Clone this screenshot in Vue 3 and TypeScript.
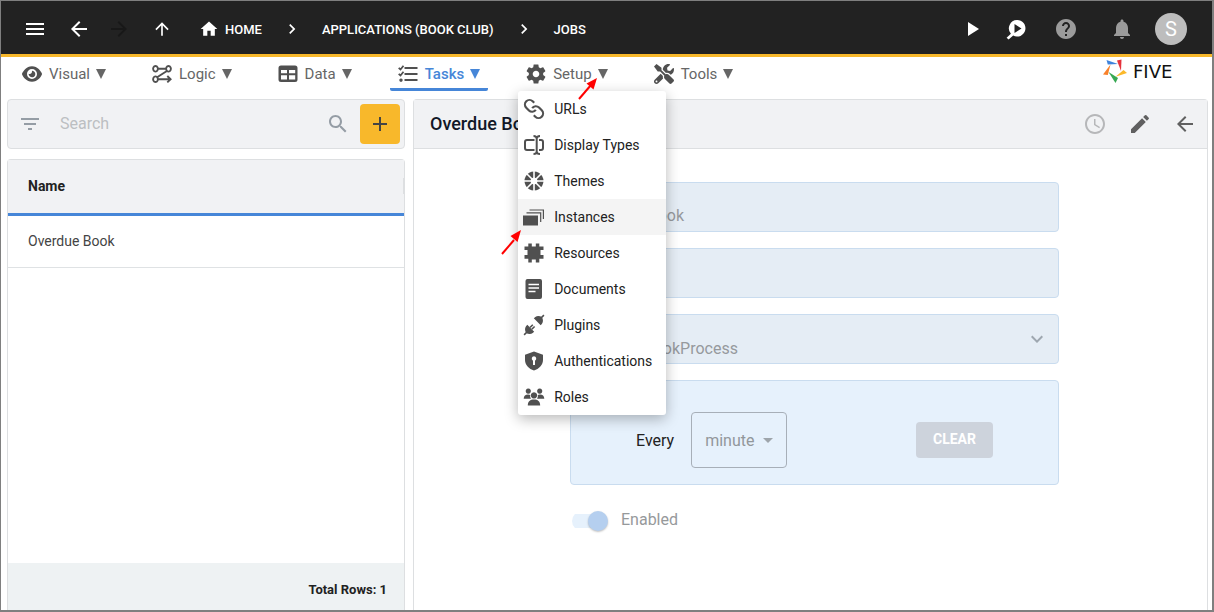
<script setup lang="ts">
import { h, ref } from 'vue'

interface Glyph {
  box: string
  fill?: string
  line?: string
  width?: number
  cut?: string
  cutWidth?: number
}

interface Tab {
  label: string
  icon: Glyph
}

const g24 = (fill: string): Glyph => ({ box: '0 0 24 24', fill })

const icons: Record<string, Glyph> = {
  menu: g24('M3 18h18v-2H3v2zm0-5h18v-2H3v2zm0-7v2h18V6H3z'),
  back: g24('M20 11H7.83l5.59-5.59L12 4l-8 8 8 8 1.41-1.41L7.83 13H20v-2z'),
  forward: g24('M12 4l-1.41 1.41L16.17 11H4v2h12.17l-5.58 5.59L12 20l8-8z'),
  up: g24('M4 12l1.41 1.41L11 7.83V20h2V7.83l5.58 5.59L20 12l-8-8-8 8z'),
  home: g24('M10 20v-6h4v6h5v-8h3L12 3 2 12h3v8z'),
  chevron: g24('M10 6L8.59 7.41 13.17 12l-4.58 4.59L10 18l6-6z'),
  expand: g24('M7.41 8.59L12 13.17l4.59-4.58L18 10l-6 6-6-6 1.41-1.41z'),
  play: g24('M8 5v14l11-7z'),
  inspect: {
    box: '0 0 24 24',
    fill: 'M13 3a8.3 8.3 0 1 1-3.8 15.6L4.6 22.6 2.6 20.8 6.9 16.7A8.3 8.3 0 0 1 13 3zM10.500 7v9l7-4.500z'
  },
  help: g24('M12 2C6.48 2 2 6.48 2 12s4.48 10 10 10 10-4.48 10-10S17.52 2 12 2zm1 17h-2v-2h2v2zm2.07-7.75l-.9.92C13.45 12.9 13 13.5 13 15h-2v-.5c0-1.1.45-2.1 1.17-2.83l1.24-1.26c.37-.36.59-.86.59-1.41 0-1.1-.9-2-2-2s-2 .9-2 2H8c0-2.21 1.79-4 4-4s4 1.79 4 4c0 .88-.36 1.68-.93 2.25z'),
  bell: g24('M12 22c1.1 0 2-.9 2-2h-4c0 1.1.89 2 2 2zm6-6v-5c0-3.07-1.64-5.64-4.5-6.32V4c0-.83-.67-1.5-1.5-1.5s-1.5.67-1.5 1.5v.68C7.63 5.36 6 7.92 6 11v5l-2 2v1h16v-1l-2-2z'),
  filter: g24('M10 18h4v-2h-4v2zM3 6v2h18V6H3zm3 7h12v-2H6v2z'),
  search: g24('M15.5 14h-.79l-.28-.27C15.41 12.59 16 11.11 16 9.5 16 5.91 13.09 3 9.5 3S3 5.91 3 9.5 5.91 16 9.5 16c1.61 0 3.09-.59 4.23-1.57l.27.28v.79l5 4.99L20.49 19l-4.99-5zm-6 0C7.01 14 5 11.99 5 9.5S7.01 5 9.5 5 14 7.01 14 9.5 11.99 14 9.5 14z'),
  add: g24('M19 13h-6v6h-2v-6H5v-2h6V5h2v6h6v2z'),
  clock: g24('M11.99 2C6.47 2 2 6.48 2 12s4.47 10 9.99 10C17.52 22 22 17.52 22 12S17.52 2 11.99 2zM12 20c-4.42 0-8-3.58-8-8s3.58-8 8-8 8 3.58 8 8-3.58 8-8 8zm.5-13H11v6l5.25 3.15.75-1.23-4.5-2.67z'),
  edit: g24('M3 17.25V21h3.75L17.81 9.94l-3.75-3.75L3 17.25zM20.71 7.04c.39-.39.39-1.02 0-1.41l-2.34-2.34a.9959.9959 0 0 0-1.41 0l-1.83 1.83 3.75 3.75 1.83-1.83z'),
  visual: {
    box: '0 0 576 512',
    fill: 'M288 32c-80.8 0-145.5 36.8-192.6 80.6C48.6 156 17.3 208 2.5 243.7c-3.3 7.9-3.3 16.7 0 24.6C17.3 304 48.6 356 95.4 399.4C142.5 443.2 207.2 480 288 480s145.5-36.8 192.6-80.6c46.8-43.5 78.1-95.4 93-131.1c3.3-7.9 3.3-16.7 0-24.6c-14.9-35.7-46.2-87.7-93-131.1C433.5 68.8 368.8 32 288 32zM144 256a144 144 0 1 1 288 0 144 144 0 1 1 -288 0zm144-64c0 35.3-28.7 64-64 64c-7.1 0-13.9-1.2-20.3-3.3c-5.5-1.8-11.9 1.6-11.7 7.4c.3 6.9 1.3 13.8 3.2 20.7c13.7 51.2 66.4 81.6 117.6 67.9s81.6-66.4 67.9-117.6c-11.1-41.5-47.8-69.4-88.6-71.1c-5.8-.2-9.2 6.1-7.4 11.7c2.1 6.4 3.3 13.2 3.3 20.3z'
  },
  logic: {
    box: '0 0 20 20',
    line: 'M3.5 2a2.4 2.8 0 1 0 .01 0zM16.5 2a2.4 2.8 0 1 0 .01 0zM3.5 12.4a2.4 2.8 0 1 0 .01 0zM6 4.8H14M14.5 7.2L5.5 13M6 15.2H18.5M15.3 12L18.6 15.2 15.3 18.4',
    width: 1.9
  },
  data: {
    box: '0 0 20 20',
    fill: 'M3 1.5H17a2.5 2.5 0 0 1 2.5 2.5V15.5a2.5 2.5 0 0 1-2.5 2.5H3a2.5 2.5 0 0 1-2.5-2.5V4A2.5 2.5 0 0 1 3 1.5zM3 6V9.3H9V6zM11 6V9.3H17.2V6zM3 11.3V15.5H9V11.3zM11 11.3V15.5H17.2V11.3z'
  },
  tasks: {
    box: '0 0 20 20',
    line: 'M6.5 4H19.5M6.5 10H19.5M6.5 16H19.5M.7 3.8L2.5 5.5 5.5 1.8M.7 9.8L2.5 11.5 5.5 7.8',
    fill: 'M3 14.4a1.7 1.7 0 1 1-.01 0z',
    width: 1.8
  },
  setup: {
    box: '2 2 20 20',
    fill: 'M19.14 12.94c.04-.3.06-.61.06-.94 0-.32-.02-.64-.07-.94l2.03-1.58c.18-.14.23-.41.12-.61l-1.92-3.32c-.12-.22-.37-.29-.59-.22l-2.39.96c-.5-.38-1.03-.7-1.62-.94l-.36-2.54c-.04-.24-.24-.41-.48-.41h-3.84c-.24 0-.43.17-.47.41l-.36 2.54c-.59.24-1.13.57-1.62.94l-2.39-.96c-.22-.08-.47 0-.59.22L2.74 8.87c-.12.21-.08.47.12.61l2.03 1.58c-.05.3-.09.63-.09.94s.02.64.07.94l-2.03 1.58c-.18.14-.23.41-.12.61l1.92 3.32c.12.22.37.29.59.22l2.39-.96c.5.38 1.03.7 1.62.94l.36 2.54c.05.24.24.41.48.41h3.84c.24 0 .44-.17.47-.41l.36-2.54c.59-.24 1.13-.56 1.62-.94l2.39.96c.22.08.47 0 .59-.22l1.92-3.32c.12-.22.07-.47-.12-.61l-2.01-1.58zM12 15.3c-1.8 0-3.3-1.5-3.3-3.3s1.5-3.3 3.3-3.3 3.3 1.5 3.3 3.3-1.5 3.3-3.3 3.3z'
  },
  tools: {
    box: '0 0 512 512',
    fill: 'M501.1 395.7L384 278.6c-23.1-23.1-57.6-27.6-85.4-13.9L192 158.1V96L64 0 0 64l96 128h62.1l106.6 106.6c-13.6 27.8-9.2 62.3 13.9 85.4l117.1 117.1c14.6 14.6 38.2 14.6 52.7 0l52.7-52.7c14.5-14.6 14.5-38.2 0-52.7zM331.7 225c28.3 0 54.9 11 74.9 31l19.4 19.4c15.8-6.9 30.8-16.5 43.8-29.5 37.1-37.1 49.7-89.3 37.9-136.7-2.2-9-13.5-12.1-20.1-5.5l-74.4 74.4-67.9-11.3L334 98.9l74.4-74.4c6.6-6.6 3.4-17.9-5.7-20.2-47.4-11.7-99.6.9-136.6 37.9-28.5 28.5-41.9 66.1-41.2 103.6l82.1 82.1c8.1-1.9 16.5-2.9 24.7-2.9zm-103.9 82l-56.7-56.7L18.7 402.8c-25 25-25 65.5 0 90.5s65.5 25 90.5 0l123.6-123.6c-7.6-19.9-9.9-41.6-5-62.7zM64 472c-13.2 0-24-10.8-24-24 0-13.3 10.7-24 24-24s24 10.7 24 24c0 13.2-10.7 24-24 24z'
  },
  urls: {
    box: '1 1 22 22',
    line: 'M14 13a5 5 0 0 1-7.54.54l-3-3a5 5 0 0 1 7.07-7.07l1.72 1.71M10 11a5 5 0 0 1 7.54-.54l3 3a5 5 0 0 1-7.07 7.07l-1.71-1.71',
    width: 2.4
  },
  display: {
    box: '0 0 20 20',
    line: 'M10.5 5H3A2 2 0 0 0 1 7V13A2 2 0 0 0 3 15H10.5M15 5H17A2 2 0 0 1 19 7V13A2 2 0 0 1 17 15H15M9.5 1C11.5 1 12.7 1.8 12.7 3.5V16.5C12.7 18.2 11.5 19 9.5 19M16 1C14 1 12.7 1.8 12.7 3.5M16 19C14 19 12.7 18.2 12.7 16.5',
    width: 2
  },
  themes: {
    box: '0 0 20 20',
    fill: 'M10 .5a9.5 9.5 0 1 1-.01 0zM10 6.5a3.5 3.5 0 1 0 .01 0z',
    cut: 'M10 0V20M0 10H20M3 3L17 17M17 3L3 17',
    cutWidth: 1.6
  },
  instances: {
    box: '0 0 20 20',
    fill: 'M-1 8.5H14V18.5H-1z',
    line: 'M2.5 5.8H16.7V15M5.5 3H19.4V12',
    width: 1.2
  },
  resources: {
    box: '0 0 20 20',
    fill: 'M4.3 3.5V.5H7.8V3.5H11.8V.5H15.3V3.5H19.5V7H16.5V12H19.5V15.8H15.3V19.5H11.8V16.5H7.8V19.5H4.3V15.8H.5V12H3.5V7H.5V3.5z'
  },
  documents: {
    box: '0 0 20 20',
    fill: 'M3.5 0H16a2 2 0 0 1 2 2V18a2 2 0 0 1-2 2H3.5a2 2 0 0 1-2-2V2a2 2 0 0 1 2-2z',
    cut: 'M4.5 5.5H15M4.5 9H15M4.5 12.5H11.5',
    cutWidth: 1.4
  },
  plugins: {
    box: '0 0 20 20',
    fill: 'M9.8 3.3L16.7 10.2 18 8.7C19.3 7 19.3 4.6 18 2 15.4.7 13 .7 11.3 2zM3.3 9.8L10.2 16.7 8.7 18C7 19.3 4.6 19.3 2 18 .7 15.4.7 13 2 11.3z',
    line: 'M17.5 2.5L19.9.1M2.5 17.5L.1 19.9M6 12.5L8.8 9.7M7.8 14.3L10.6 11.5',
    width: 1.6
  },
  auth: {
    box: '0 0 20 20',
    fill: 'M10 .5L19 3.8V9C19 14 15 18 10 19.5 5 18 1 14 1 9V3.8zM10 5.2a2.4 2.4 0 0 0-1 4.5V14H11V9.7A2.4 2.4 0 0 0 10 5.2z'
  },
  roles: {
    box: '0 0 20 20',
    fill: 'M4.3 1.5a2.6 2.6 0 1 1-.01 0zM15.7 1.5a2.6 2.6 0 1 1-.01 0zM10 5.2a3.2 3.2 0 1 1-.01 0zM-.3 11.8C-.3 9 1.5 7.5 4 7.5 5 7.5 5.7 7.7 6.2 8.1 5.9 9.6 6.4 10.8 7 11.8zM20.3 11.8C20.3 9 18.5 7.5 16 7.5 15 7.5 14.3 7.7 13.8 8.1 14.1 9.6 13.6 10.8 13 11.8zM3.8 18.5C3.8 14.5 6.2 12.6 10 12.6S16.2 14.5 16.2 18.5z'
  }
}

const tabs: Tab[] = [
  { label: 'Visual', icon: icons.visual },
  { label: 'Logic', icon: icons.logic },
  { label: 'Data', icon: icons.data },
  { label: 'Tasks', icon: icons.tasks },
  { label: 'Setup', icon: icons.setup },
  { label: 'Tools', icon: icons.tools }
]

const setupMenu: Tab[] = [
  { label: 'URLs', icon: icons.urls },
  { label: 'Display Types', icon: icons.display },
  { label: 'Themes', icon: icons.themes },
  { label: 'Instances', icon: icons.instances },
  { label: 'Resources', icon: icons.resources },
  { label: 'Documents', icon: icons.documents },
  { label: 'Plugins', icon: icons.plugins },
  { label: 'Authentications', icon: icons.auth },
  { label: 'Roles', icon: icons.roles }
]

const activeTab = ref('Tasks')
const openTab = ref('Setup')
const highlighted = ref('Instances')
const query = ref('')
const jobs = ref(['Overdue Book'])
const enabled = ref(true)

const GlyphIcon = (props: { glyph: Glyph }) => {
  const { glyph } = props
  return h('svg', { viewBox: glyph.box, 'aria-hidden': 'true' }, [
    glyph.fill ? h('path', { d: glyph.fill, fill: 'currentColor', 'fill-rule': 'evenodd' }) : null,
    glyph.line ? h('path', { d: glyph.line, fill: 'none', stroke: 'currentColor', 'stroke-width': glyph.width }) : null,
    glyph.cut ? h('path', { d: glyph.cut, fill: 'none', stroke: '#fff', 'stroke-width': glyph.cutWidth }) : null
  ])
}
GlyphIcon.props = ['glyph']
</script>

<template>
  <div class="app">
    <header class="topbar">
      <button class="icon-btn" aria-label="Menu"><GlyphIcon :glyph="icons.menu" /></button>
      <button class="icon-btn" aria-label="Back"><GlyphIcon :glyph="icons.back" /></button>
      <div class="steps">
        <button class="icon-btn dim" aria-label="Forward" disabled><GlyphIcon :glyph="icons.forward" /></button>
        <button class="icon-btn" aria-label="Up"><GlyphIcon class="small" :glyph="icons.up" /></button>
      </div>
      <nav class="crumbs" aria-label="Breadcrumb">
        <a href="#home"><GlyphIcon class="small" :glyph="icons.home" />HOME</a>
        <GlyphIcon class="small" :glyph="icons.chevron" />
        <a href="#applications">APPLICATIONS (BOOK CLUB)</a>
        <GlyphIcon class="small" :glyph="icons.chevron" />
        <a href="#jobs">JOBS</a>
      </nav>
      <div class="actions">
        <button class="icon-btn" aria-label="Run"><GlyphIcon :glyph="icons.play" /></button>
        <button class="icon-btn" aria-label="Inspect"><GlyphIcon :glyph="icons.inspect" /></button>
      </div>
      <div class="actions status">
        <button class="icon-btn" aria-label="Help"><GlyphIcon :glyph="icons.help" /></button>
        <button class="icon-btn" aria-label="Notifications"><GlyphIcon :glyph="icons.bell" /></button>
      </div>
      <button class="avatar" aria-label="Account">S</button>
    </header>

    <div class="menubar">
      <nav class="tabs">
        <div v-for="tab in tabs" :key="tab.label" class="tab-slot">
          <button class="tab" :class="{ active: tab.label === activeTab }" @click="openTab = tab.label">
            <GlyphIcon :glyph="tab.icon" />
            <span>{{ tab.label }}</span>
            <svg class="caret" viewBox="0 0 10 10" aria-hidden="true"><path d="M0 0H10L5 10z" fill="currentColor" /></svg>
          </button>
          <div v-if="tab.label === 'Setup' && openTab === 'Setup'" class="dropdown">
            <button
              v-for="item in setupMenu"
              :key="item.label"
              :class="{ on: item.label === highlighted }"
              @mouseenter="highlighted = item.label"
            >
              <GlyphIcon :glyph="item.icon" />{{ item.label }}
            </button>
            <svg class="pointer first" viewBox="0 0 24 26" aria-hidden="true">
              <path d="M2 24L14 10" stroke="#f00" stroke-width="2" /><path d="M20 3L9.5 8.5 16.5 14.5z" fill="#f00" />
            </svg>
            <svg class="pointer second" viewBox="0 0 24 26" aria-hidden="true">
              <path d="M2 25L14 11" stroke="#f00" stroke-width="2" /><path d="M21 1L10.5 7 17.5 13z" fill="#f00" />
            </svg>
          </div>
        </div>
      </nav>
      <div class="brand">
        <svg viewBox="0 0 24 24" aria-hidden="true">
          <path d="M3.5 1L4.8 5.5 15 5z" fill="#3f84dc" />
          <path d="M14 1.5L18.5 .5 18 12z" fill="#e5323c" />
          <path d="M20.500 11L24 14 12.500 17.800z" fill="#fbb829" />
          <path d="M5.5 13L15 19 12.5 24z" fill="#37a852" />
          <path d="M7.5 5.5L0 15.5 4.8 16z" fill="#f9812a" />
        </svg>
        <span>FIVE</span>
      </div>
    </div>

    <main class="content">
      <section class="list">
        <div class="searchbar">
          <GlyphIcon :glyph="icons.filter" />
          <input v-model="query" type="text" placeholder="Search" aria-label="Search" />
          <GlyphIcon :glyph="icons.search" />
          <button class="add" aria-label="Add"><GlyphIcon :glyph="icons.add" /></button>
        </div>
        <div class="grid">
          <table>
            <thead>
              <tr><th scope="col"><div>Name</div></th></tr>
            </thead>
            <tbody>
              <tr v-for="job in jobs" :key="job"><td>{{ job }}</td></tr>
            </tbody>
          </table>
          <footer>Total Rows: {{ jobs.length }}</footer>
        </div>
      </section>

      <section class="detail">
        <header class="detail-head">
          <h1>Overdue Book</h1>
          <button class="icon-btn faded" aria-label="History"><GlyphIcon :glyph="icons.clock" /></button>
          <button class="icon-btn" aria-label="Edit"><GlyphIcon :glyph="icons.edit" /></button>
          <button class="icon-btn" aria-label="Close"><GlyphIcon :glyph="icons.back" /></button>
        </header>
        <form class="form" @submit.prevent>
          <input class="field" type="text" value="Overdue Book" aria-label="Title" disabled />
          <input class="field" type="text" value="" aria-label="Details" disabled />
          <div class="picker">
            <select class="field" aria-label="Function" disabled>
              <option>OverdueBookProcess</option>
            </select>
            <GlyphIcon :glyph="icons.expand" />
          </div>
          <div class="schedule">
            <label for="period">Every</label>
            <div class="period">
              <select id="period" disabled>
                <option>minute</option>
              </select>
              <svg viewBox="0 0 10 5" aria-hidden="true"><path d="M0 0H10L5 5z" fill="currentColor" /></svg>
            </div>
            <button class="clear" type="button" disabled>CLEAR</button>
          </div>
          <label class="toggle"><input v-model="enabled" type="checkbox" disabled /><span>Enabled</span></label>
        </form>
      </section>
    </main>
  </div>
</template>

<style>
body {
  margin: 0;
}
</style>

<style scoped>
.app {
  box-sizing: border-box;
  display: flex;
  flex-direction: column;
  min-height: 100vh;
  border: solid #7f7f7f;
  border-width: 1px 2px 2px 1px;
  background: #fff;
  color: #222;
  font-family: Roboto, "Liberation Sans", sans-serif;
  font-size: 14px;
}
.app *,
.app *::before {
  box-sizing: border-box;
}
button {
  padding: 0;
  border: 0;
  background: none;
  color: inherit;
  font: inherit;
}
input,
select {
  min-width: 0;
  font: inherit;
}
svg {
  display: block;
  flex: none;
  width: 24px;
  height: 24px;
  overflow: visible;
}
svg.small {
  width: 20px;
  height: 20px;
}
.icon-btn {
  display: grid;
  place-items: center;
  flex: none;
  width: 24px;
  height: 24px;
}

.topbar {
  display: flex;
  align-items: center;
  gap: 20px;
  height: 56px;
  padding: 3px 25px 0 22px;
  border-bottom: 3px solid #f8b82b;
  background: #222;
  color: #fff;
}
.steps {
  display: flex;
  gap: 19px;
  margin-left: -4px;
}
.topbar .dim {
  color: #181818;
}
.crumbs {
  display: flex;
  flex: 1;
  align-items: center;
  gap: 20px;
  padding-left: 5px;
  font-size: 13px;
  font-weight: 500;
}
.crumbs a {
  display: flex;
  align-items: center;
  gap: 6px;
  color: inherit;
  text-decoration: none;
}
.actions {
  display: flex;
  gap: 20px;
}
.status {
  gap: 32px;
  padding: 0 1px 0 6px;
  color: #9b9b9b;
}
.avatar {
  width: 32px;
  height: 32px;
  border-radius: 50%;
  background: #bdbdbd;
  font-size: 20px;
  line-height: 32px;
}

.menubar {
  display: flex;
  justify-content: space-between;
  height: 42px;
  padding: 0 21px 0 13px;
}
.tabs {
  display: flex;
  gap: 30px;
  height: 34px;
}
.tab-slot {
  position: relative;
}
.tab {
  display: flex;
  align-items: center;
  gap: 6px;
  height: 34px;
  padding: 3px 8px 0;
  border-bottom: 3px solid transparent;
  color: #666;
  font-size: 15px;
}
.tab svg {
  width: 20px;
  height: 20px;
  margin-right: 1px;
  color: #505050;
}
.tab svg.caret {
  width: 10px;
  height: 10px;
  margin: 0;
  color: inherit;
}
.tab.active {
  border-color: #4686d8;
  border-radius: 2px;
  color: #4686d8;
  font-weight: 500;
}
.brand {
  display: flex;
  align-items: center;
  gap: 6px;
  width: 88px;
  height: 28px;
  color: #111;
  font-family: "DejaVu Sans", sans-serif;
  font-size: 18px;
}

.dropdown {
  position: absolute;
  z-index: 5;
  top: 34px;
  left: 0;
  width: 148px;
  border-radius: 3px;
  background: #fff;
  box-shadow: 0 4px 14px rgba(0, 0, 0, 0.28);
}
.dropdown button {
  display: flex;
  align-items: center;
  gap: 10px;
  width: 100%;
  height: 36px;
  padding-left: 6px;
  color: #222;
  font-size: 14px;
  white-space: nowrap;
}
.dropdown button.on {
  background: #f4f4f4;
}
.dropdown button svg {
  width: 20px;
  height: 20px;
  color: #505050;
}
.pointer {
  position: absolute;
  width: 24px;
  height: 26px;
}
.pointer.first {
  top: -16px;
  left: 59px;
}
.pointer.second {
  top: 138px;
  left: -18px;
}

.content {
  display: flex;
  flex: 1;
  gap: 8px;
  padding: 0 4px 0 6px;
}
.list {
  display: flex;
  flex: 0 1 398px;
  flex-direction: column;
  gap: 10px;
}
.searchbar {
  display: flex;
  align-items: center;
  height: 50px;
  padding: 0 4px 0 10px;
  border: 1px solid #dddfe1;
  border-radius: 4px;
  background: #f1f2f4;
  color: #959da5;
}
.searchbar input {
  flex: 1;
  padding: 0 18px 2px;
  border: 0;
  outline: 0;
  background: none;
  color: #222;
  font-size: 16px;
}
.searchbar input::placeholder {
  color: #bcbfc2;
  opacity: 1;
}
.searchbar .add {
  display: grid;
  place-items: center;
  width: 40px;
  height: 40px;
  margin-left: 10px;
  border-radius: 4px;
  background: #f8b82b;
  color: #444;
}
.grid {
  display: flex;
  flex: 1;
  flex-direction: column;
  justify-content: space-between;
  border: 1px solid #dddfe1;
  border-bottom: 0;
  border-radius: 4px 4px 0 0;
}
table {
  width: 100%;
  border-spacing: 0;
}
th {
  height: 56px;
  padding: 0 0 2px;
  border-bottom: 3px solid #4686d8;
  background: #f1f2f4;
  text-align: left;
  font-weight: 700;
}
th div {
  padding-left: 20px;
  border-right: 1px solid #dddfe1;
}
td {
  height: 52px;
  padding: 0 20px 2px;
  border-bottom: 1px solid #dfe2e4;
  color: #444;
}
.grid footer {
  height: 47px;
  padding-right: 17px;
  background: #eef2f3;
  font-size: 13px;
  font-weight: 700;
  line-height: 53px;
  text-align: right;
}

.detail {
  flex: 1;
  min-width: 0;
  border: 1px solid #dddfe1;
  border-bottom: 0;
  border-radius: 4px 4px 0 0;
}
.detail-head {
  display: flex;
  align-items: center;
  gap: 21px;
  height: 49px;
  padding: 0 10px 0 16px;
  border-bottom: 1px solid #dddfe1;
  background: #f1f2f4;
  color: #606060;
}
.detail-head h1 {
  flex: 1;
  margin: 0;
  padding-bottom: 2px;
  color: #111827;
  font-size: 18px;
  font-weight: 500;
}
.detail-head .faded {
  color: #b6b7b9;
}
.form {
  display: flex;
  flex-direction: column;
  gap: 16px;
  padding: 33px 148px 0 156px;
}
.field {
  width: 100%;
  height: 50px;
  padding: 16px 14px 0;
  border: 1px solid #c9dcef;
  border-radius: 4px;
  background: #e5edf5;
  color: #96999d;
  font-size: 16px;
  opacity: 1;
  appearance: none;
}
select.field {
  padding-top: 18px;
}
.picker {
  position: relative;
}
.picker svg {
  position: absolute;
  top: 13px;
  right: 10px;
  color: #9ea7b0;
}
.schedule {
  display: flex;
  align-items: center;
  gap: 17px;
  height: 105px;
  padding: 15px 65px 0;
  border: 1px solid #c9dcef;
  border-radius: 4px;
  background: #e6f1fc;
  font-size: 16px;
}
.period {
  position: relative;
  color: #9ea5ab;
}
.period select {
  width: 96px;
  height: 56px;
  padding: 0 13px;
  border: 1px solid #a7afb8;
  border-radius: 4px;
  background: none;
  color: #92979b;
  opacity: 1;
  appearance: none;
}
.period svg {
  position: absolute;
  top: 26px;
  right: 14px;
  width: 10px;
  height: 5px;
}
.clear {
  width: 77px;
  height: 36px;
  margin-left: auto;
  padding-bottom: 2px;
  border-radius: 4px;
  background: #cdd3dc;
  color: #fff;
  font-size: 14px;
  font-weight: 700;
}
.toggle {
  display: flex;
  align-items: center;
  gap: 13px;
  margin-top: 9px;
  color: #96999b;
  font-size: 16px;
}
.toggle span {
  padding-bottom: 2px;
}
.toggle input {
  width: 36px;
  height: 20px;
  margin: 0 0 0 2px;
  background: linear-gradient(#e6f1fc, #e6f1fc) 0 3px / 30px 14px no-repeat;
  border-radius: 10px;
  appearance: none;
}
.toggle input::before {
  display: block;
  width: 20px;
  height: 20px;
  margin-left: auto;
  border-radius: 50%;
  background: #b5cfef;
  box-shadow: 0 1px 2px rgba(0, 0, 0, 0.25);
  content: "";
}
</style>
